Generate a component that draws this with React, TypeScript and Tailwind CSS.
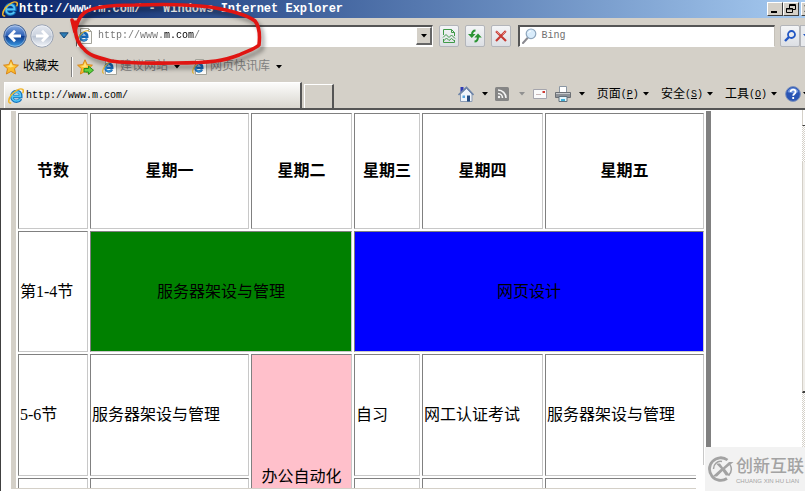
import type { ReactNode } from "react";

const cjk = "font-['Liberation_Mono','Noto_Sans_CJK_SC',monospace]";

function IeLogo({ className = "h-4 w-4" }: { className?: string }) {
  return (
    <svg viewBox="0 0 16 16" className={`shrink-0 ${className}`} fill="none" aria-hidden="true">
      <path d="M12.600 10.800C11.800 12.300 10.300 13.200 8.500 13.200c-2.700 0-4.700-2-4.700-4.800s2-4.900 4.700-4.900 4.300 2 4.300 5H5" stroke="#1273bd" strokeWidth="3.400" />
      <path d="M12.300 10.800C11.500 12.200 10.100 13 8.500 13c-2.500 0-4.400-2-4.400-4.600s1.900-4.600 4.400-4.600 4 2 4 4.600H5" stroke="#55c6f5" strokeWidth="1.700" />
      <path d="M2.600 15C.2 15.600-.2 11.500 3.400 6.800 7 2.300 12.600-.2 14.600 1.400c1 .8.8 2.200.2 3.400" stroke="#f0b52a" strokeWidth="1.500" strokeLinecap="round" />
    </svg>
  );
}

function IePage() {
  return (
    <svg viewBox="0 0 16 16" className="h-4 w-4 shrink-0" fill="none" aria-hidden="true">
      <path d="M3.500.5h8l3 3v12h-11z" fill="#fcfcfa" stroke="#a3a39a" />
      <path d="M11.500.5v3h3" stroke="#a3a39a" />
      <path d="M10 10.600c-.6 1.300-1.700 1.900-3 1.900-2 0-3.500-1.600-3.500-3.800S5 5 7 5s3.300 1.600 3.300 3.700H4.500" stroke="#1668b8" strokeWidth="2.400" />
      <path d="M9.800 10.600c-.6 1.200-1.600 1.700-2.800 1.700-1.800 0-3.200-1.500-3.200-3.600S5.200 5.300 7 5.300" stroke="#4db2ea" />
      <path d="M2 14.300C-.4 14.300.3 10 3.600 6.300 6.700 3 10.800 1.700 11.900 3.200" stroke="#e3b53a" strokeWidth="1.200" />
    </svg>
  );
}

function Caret({ className = "text-black" }: { className?: string }) {
  return (
    <svg viewBox="0 0 6 4" className={`h-1 w-1.5 shrink-0 ${className}`} fill="currentColor" aria-hidden="true">
      <path d="M0 0h6L3 3.400z" />
    </svg>
  );
}

function Star({ arrow = false }: { arrow?: boolean }) {
  return (
    <svg viewBox="0 0 17 16" className="h-4 w-[17px] shrink-0" aria-hidden="true">
      <path d="M8 .8l2.200 4.800 5.200.6-3.900 3.500 1.100 5.300L8 12.400 3.400 15l1.100-5.300L.6 6.200l5.200-.6z" fill="#fbbd2c" stroke="#d9861a" strokeLinejoin="round" />
      <path d="M8 3l1.400 3.400 3 .5-5 1.600-3.800-1.600 3-.5z" fill="#ffe27c" />
      {arrow && <path d="M7 9.500h4.500V7l5 4.200-5 4.200V13H7z" fill="#5fd03c" stroke="#278a1c" strokeLinejoin="round" />}
    </svg>
  );
}

function RoundArrow({ back = false }: { back?: boolean }) {
  return (
    <svg viewBox="0 0 24 24" className="h-6 w-6" aria-hidden="true">
      <defs>
        <linearGradient id={back ? "back" : "fwd"} x1="0" y1="0" x2="0" y2="1">
          <stop offset="0" stopColor={back ? "#8fb2e6" : "#e6eaf1"} />
          <stop offset=".48" stopColor={back ? "#2c5fb4" : "#cbd2de"} />
          <stop offset=".52" stopColor={back ? "#0d3b8e" : "#b9c3d2"} />
          <stop offset="1" stopColor={back ? "#3fa2ea" : "#f6f8fc"} />
        </linearGradient>
      </defs>
      <circle cx="12" cy="12" r="11.200" fill={`url(#${back ? "back" : "fwd"})`} stroke={back ? "#4b668f" : "#98a1b1"} />
      <circle cx="12" cy="12" r="10.200" fill="none" stroke="#fff" strokeOpacity=".45" strokeWidth=".8" />
      <path
        d={back ? "M18 12H7.500M12 6.800L6.800 12l5.200 5.200" : "M6 12h10.500M12 6.800l5.200 5.200-5.200 5.200"}
        fill="none"
        stroke="#fff"
        strokeWidth="2.800"
      />
    </svg>
  );
}

function NavButton({ label, children }: { label: string; children: ReactNode }) {
  return (
    <button
      aria-label={label}
      className="flex h-[22px] w-5 shrink-0 items-center justify-center rounded-xs border border-[#b3b5ba] bg-linear-to-b from-[#f4f5f7] to-[#dcdfe4]"
    >
      {children}
    </button>
  );
}

function TitleButton({ label, children }: { label: string; children: ReactNode }) {
  return (
    <button
      aria-label={label}
      className="flex h-3.5 w-4 shrink-0 items-center justify-center border border-t-white border-r-[#404040] border-b-[#404040] border-l-white bg-[#d4d0c8]"
    >
      <svg viewBox="0 0 12 10" className="h-2.5 w-3" fill="none" stroke="#000" aria-hidden="true">
        {children}
      </svg>
    </button>
  );
}

function TitleBar() {
  return (
    <header className="flex h-[18px] shrink-0 items-center bg-linear-to-r from-[#0a246a] to-[#a6caf0] pl-0.5">
      <IeLogo />
      <h1 className="ml-px flex-1 font-['Liberation_Mono',monospace] text-[12px] leading-4 font-bold whitespace-nowrap text-white">
        http://www.m.com/ - Windows Internet Explorer
      </h1>
      <TitleButton label="Minimize">
        <path d="M2 8h6" strokeWidth="2" />
      </TitleButton>
      <TitleButton label="Restore">
        <path d="M4.500 4V.5h6v5H8M4 1.500h7M1.500 4.500h6v4h-6zM1 5h7" />
      </TitleButton>
      <div className="ml-0.5 flex w-1 shrink-0 overflow-hidden">
        <TitleButton label="Close">
          <path d="M2 1l7 7M9 1L2 8" strokeWidth="2" />
        </TitleButton>
      </div>
    </header>
  );
}

function NavRow() {
  return (
    <div className="flex h-[35px] shrink-0 items-center overflow-hidden pl-[3px]">
      <button aria-label="Back" className="mr-[3px] shrink-0 rounded-full">
        <RoundArrow back />
      </button>
      <button aria-label="Forward" className="shrink-0 rounded-full">
        <RoundArrow />
      </button>
      <button aria-label="Recent pages" className="mx-[5px] shrink-0">
        <svg viewBox="0 0 10 7" className="h-[7px] w-2.5" aria-hidden="true">
          <path d="M.8.8h8.400L5 6z" fill="#2d7db5" stroke="#1c4b78" strokeLinejoin="round" />
        </svg>
      </button>
      <div className="mr-1.5 ml-0.5 flex h-[22px] min-w-0 flex-[359] items-center border border-t-2 border-t-[#555] border-r-white border-b-white border-l-[#555] bg-white">
        <IePage />
        <input
          aria-label="Address"
          defaultValue="http://www.m.com/"
          className="ml-[5px] min-w-0 flex-1 bg-[linear-gradient(to_right,#707070_66px,#000_66px,#000_96px,#707070_96px)] bg-clip-text font-['Liberation_Mono',monospace] text-[10px] leading-4 text-transparent outline-none"
        />
        <button
          aria-label="Show addresses"
          className="flex h-[18px] w-4 items-center justify-center border border-t-white border-r-2 border-r-[#666] border-b-2 border-b-[#666] border-l-white bg-[#d4d0c8]"
        >
          <Caret />
        </button>
      </div>
      <div className="mr-[7px] flex gap-1.5">
        <NavButton label="Compatibility view">
          <svg viewBox="0 0 14 16" className="h-4 w-3.5" fill="none" stroke="#3f9a48" aria-hidden="true">
            <path d="M1.500 7V1.500h8l3 3V8M9.500 1.500v3h3M1.500 11v3.500h11V12" />
            <path d="M1 9.500l3-3 3 3 2.500-2.500L13 10.500M1.500 13l3-3 2.500 2.500 2.500-2 3 2.500" />
          </svg>
        </NavButton>
        <NavButton label="Refresh">
          <svg viewBox="0 0 16 14" className="h-3.5 w-4" fill="none" stroke="#2b9433" strokeWidth="2" aria-hidden="true">
            <path d="M8.500 1.500C6 1.500 5 3 5 6" />
            <path d="M7.500 12.500c2.500 0 3.500-1.500 3.500-5" />
            <path d="M1 5h7.500L4.800 9zM7.300 8.500h7.500L11 4.500z" fill="#2b9433" stroke="none" />
          </svg>
        </NavButton>
        <NavButton label="Stop">
          <svg viewBox="0 0 12 12" className="h-3 w-3" fill="none" aria-hidden="true">
            <path d="M1 1.200l10 9.800M10.800 1L1 11" stroke="#c63a34" strokeWidth="2.200" />
            <path d="M1.500 1.500l3 3M10.500 1.500l-3 3" stroke="#e88d84" />
          </svg>
        </NavButton>
      </div>
      <div className="mr-[5px] flex h-[22px] min-w-0 flex-[254] items-center border border-t-2 border-t-[#555] border-r-[#c4c0b8] border-b-white border-l-2 border-l-[#555] bg-white pl-0.5">
        <svg viewBox="0 0 15 16" className="h-4 w-[15px] shrink-0" aria-hidden="true">
          <path d="M5.500 10L1 15" stroke="#8a8a90" strokeWidth="2" strokeLinecap="round" />
          <circle cx="9" cy="5.800" r="4.800" fill="#d9ecfb" stroke="#8ea6bd" strokeWidth="1.200" />
          <path d="M6.500 5a2.800 2.800 0 012.500-2" stroke="#fff" fill="none" />
        </svg>
        <input
          aria-label="Search"
          placeholder="Bing"
          className="ml-1 min-w-0 flex-1 font-['Liberation_Mono',monospace] text-[10px] leading-4 placeholder:text-[#707070] outline-none"
        />
      </div>
      <NavButton label="Search Bing">
        <svg viewBox="0 0 12 12" className="h-3 w-3" fill="none" stroke="#2257c4" aria-hidden="true">
          <circle cx="7.500" cy="4.500" r="3.500" strokeWidth="1.800" />
          <path d="M5 7L1 11" strokeWidth="2.400" />
        </svg>
      </NavButton>
      <div className="flex h-[22px] w-[5px] shrink-0 items-center overflow-hidden border-y border-l border-[#b3b5ba] bg-[#e8eaed] pl-0.5">
        <Caret className="text-[#2257c4]" />
      </div>
    </div>
  );
}

function FavoritesRow() {
  return (
    <div className={`flex h-[27px] shrink-0 items-center pl-[3px] text-[12px] leading-4 whitespace-nowrap ${cjk}`}>
      <button className="flex items-center gap-[3px]">
        <Star />
        收藏夹
      </button>
      <span className="ml-3 h-5 w-0.5 border-l border-[#808080] bg-white" />
      <button aria-label="Add to favorites" className="ml-1">
        <Star arrow />
      </button>
      <button className="ml-2 flex items-center gap-0.5 text-[#808080]">
        <IePage />
        建议网站
        <span className="ml-1">
          <Caret />
        </span>
      </button>
      <button className="ml-3 flex items-center gap-0.5 text-[#808080]">
        <IePage />
        网页快讯库
        <span className="ml-1">
          <Caret />
        </span>
      </button>
    </div>
  );
}

const menus = [
  { name: "页面", key: "P" },
  { name: "安全", key: "S" },
  { name: "工具", key: "O" },
];

function TabRow() {
  return (
    <div className={`flex h-[30px] shrink-0 items-end overflow-hidden border-b-2 border-[#555] pl-1 text-[12px] leading-4 whitespace-nowrap ${cjk}`}>
      <button className="flex h-[26px] w-[298px] items-center gap-0.5 border-t border-r-2 border-l border-t-white border-r-[#555] border-l-white bg-linear-to-b from-[#fcfcfb] to-[#d9d6cf] pl-[3px] text-[10px]">
        <IeLogo />
        http://www.m.com/
      </button>
      <button
        aria-label="New tab"
        className="ml-0.5 h-6 w-[30px] border-t border-r-2 border-l border-t-white border-r-[#555] border-l-white"
      />
      <div className="flex h-7 flex-1 items-center justify-end">
        <button aria-label="Home" className="mr-2 shrink-0">
          <svg viewBox="0 0 16 16" className="h-4 w-4" aria-hidden="true">
            <path d="M2.500 1h3v5h-3z" fill="#2d38b5" />
            <path d="M2.500 8L8.500 2.500l5.500 5.500v7.500H2.500z" fill="#eef3fa" stroke="#8b9bb4" />
            <path d="M.5 9l8-7.500 7 7.500" fill="none" stroke="#6d84a8" strokeWidth="1.600" />
            <path d="M9 9.500h3v6H9z" fill="#254c82" />
            <path d="M4.500 9.500h2.500V12H4.500z" fill="#58a5de" />
          </svg>
        </button>
        <Caret />
        <button aria-label="Feeds" className="mr-2.5 ml-[7px] shrink-0">
          <svg viewBox="0 0 14 14" className="h-3.5 w-3.5" fill="none" stroke="#f4f4f4" aria-hidden="true">
            <rect width="14" height="14" rx="1.500" fill="#858585" stroke="none" />
            <path d="M3 6.500A4.500 4.500 0 017.500 11M3 3a8 8 0 018 8" strokeWidth="1.600" />
            <circle cx="4" cy="10" r="1.200" fill="#f4f4f4" stroke="none" />
          </svg>
        </button>
        <Caret className="text-[#909090]" />
        <button aria-label="Read mail" className="mx-2 shrink-0">
          <svg viewBox="0 0 14 10" className="h-2.5 w-3.5" aria-hidden="true">
            <path d="M.5.5h13v9H.5z" fill="#fafafa" stroke="#a5a5ad" />
            <path d="M9.500 2h2.500v2H9.500z" fill="#cf3b32" />
            <path d="M3 5.500h5" stroke="#c9b8b8" />
          </svg>
        </button>
        <button aria-label="Print" className="mr-2 shrink-0">
          <svg viewBox="0 0 16 16" className="h-4 w-4" aria-hidden="true">
            <path d="M4.500.5h7v6h-7z" fill="#fff" stroke="#8b97a4" />
            <path d="M.5 6.500h15v5H.5z" fill="#8d9196" stroke="#6b6f74" />
            <path d="M1 7.500h14" stroke="#c9cccf" />
            <path d="M4 10.500h8v5H4z" fill="#e4f5fb" stroke="#62717d" />
            <path d="M6 13h4v2H6z" fill="#40b0d8" />
          </svg>
        </button>
        <Caret />
        {menus.map((menu) => (
          <button key={menu.key} className="ml-3 flex items-center gap-1">
            <span className="flex items-center pt-0.5">
              {menu.name}
              <span className="text-[10px]">
                (<u>{menu.key}</u>)
              </span>
            </span>
            <Caret />
          </button>
        ))}
        <button aria-label="Help" className="mr-0.5 ml-2 shrink-0">
          <svg viewBox="0 0 16 16" className="h-4 w-4" fill="none" aria-hidden="true">
            <circle cx="8" cy="8" r="7.400" fill="#2a55b4" stroke="#7e93bd" />
            <path d="M2.500 6a5.800 5.800 0 0111 0c-3 1.500-8 1.500-11 0z" fill="#6c92dc" />
            <path d="M5.600 6c0-3.200 5-3 5 0 0 1.800-2.400 1.800-2.400 3.800M8.200 11v2" stroke="#fff" strokeWidth="1.800" />
          </svg>
        </button>
        <div className="flex w-0.5 shrink-0 overflow-hidden">
          <Caret />
        </div>
      </div>
    </div>
  );
}

const cell = "border border-t-[#808080] border-r-[#c8c8c8] border-b-[#c8c8c8] border-l-[#808080] px-px";
const days = ["节数", "星期一", "星期二", "星期三", "星期四", "星期五"];

function Timetable() {
  return (
    <table className="w-full table-fixed border-separate border-spacing-0.5 border-r-[5px] border-l-[5px] border-r-[#808080] border-l-[#d4d0c8] font-['Liberation_Serif','Noto_Sans_CJK_SC',serif] text-[16px] leading-6 text-black">
      <colgroup>
        <col className="w-[70px]" />
        <col className="w-[159px]" />
        <col className="w-[101px]" />
        <col className="w-[66px]" />
        <col className="w-[121px]" />
        <col className="w-[159px]" />
      </colgroup>
      <thead>
        <tr className="h-[116px]">
          {days.map((day) => (
            <th key={day} className={cell}>
              {day}
            </th>
          ))}
        </tr>
      </thead>
      <tbody>
        <tr className="h-[121px]">
          <td className={cell}>第1-4节</td>
          <td colSpan={2} className={`${cell} bg-[#008000] text-center`}>
            服务器架设与管理
          </td>
          <td colSpan={3} className={`${cell} bg-[#0000ff] text-center`}>
            网页设计
          </td>
        </tr>
        <tr className="h-[122px]">
          <td className={cell}>5-6节</td>
          <td className={cell}>服务器架设与管理</td>
          <td rowSpan={2} className={`${cell} bg-[#ffc0cb] text-center`}>
            办公自动化
          </td>
          <td className={cell}>自习</td>
          <td className={cell}>网工认证考试</td>
          <td className={cell}>服务器架设与管理</td>
        </tr>
        <tr className="h-[121px]">
          <td className={cell} />
          <td className={cell} />
          <td className={cell} />
          <td className={cell} />
          <td className={cell} />
        </tr>
      </tbody>
    </table>
  );
}

const dither = "bg-[repeating-conic-gradient(#d4d0c8_0_25%,#fff_0_50%)] bg-size-[2px_2px]";

function Scrollbar() {
  return (
    <div className="flex w-[3px] shrink-0 flex-col">
      <div className="h-4 border-b border-l border-b-[#404040] border-l-[#d4d0c8] bg-white" />
      <div className={`h-9 ${dither}`} />
      <div className="flex-[230] border-b-2 border-l border-b-[#404040] border-l-[#d4d0c8] bg-[#f0eeea]" />
      <div className={`flex-[98] ${dither}`} />
    </div>
  );
}

function Watermark() {
  return (
    <div className="absolute right-0 bottom-0 flex items-end">
      <div className="h-[26px] w-[9px] bg-white" />
      <div className="flex h-11 w-[100px] items-center gap-0.5 bg-[#f2f2f2] pl-[3px] text-[#a3a3a3]">
        <svg viewBox="0 0 26 26" className="h-[26px] w-[26px] shrink-0" fill="none" stroke="currentColor" aria-hidden="true">
          <path d="M19.500 4A11.300 11.300 0 1019 22.500" strokeWidth="2.800" />
          <path d="M5.500 13c0-5 4-8.500 8.500-7.500M22 8.500c2.200 4 1.500 8-1.500 11" strokeWidth="1.500" />
          <path d="M8 7.500h4l3 4 6-5.500h4.500L17 13l5 6.500h-4.200l-3.200-4.400L9 20.500H4.500l8.500-7.700z" fill="currentColor" stroke="none" />
        </svg>
        <div className="flex flex-col whitespace-nowrap">
          <span className="font-['Noto_Sans_CJK_SC',sans-serif] text-[17px] leading-6 font-medium">创新互联</span>
          <span className="font-['Liberation_Sans',sans-serif] text-[6px] leading-2">CHUANG XIN HU LIAN</span>
        </div>
      </div>
    </div>
  );
}

function RedCircle() {
  return (
    <svg
      viewBox="0 0 280 80"
      className="pointer-events-none absolute top-0 left-0 h-20 w-[280px] drop-shadow-[3px_4px_2px_rgba(0,0,0,0.4)]"
      fill="none"
      stroke="#e01512"
      strokeWidth="3.600"
      strokeLinecap="round"
      strokeLinejoin="round"
      aria-hidden="true"
    >
      <path d="M72 20c1 4 2 8 3 12 1-6 3-14 9-19 9-7 32-8 51-8 27-1 52-1 75 2 18 3 36 7 45 14 5 6 5 15 4 24-4 4-12 6-20 10-8 3-15 5-23 6-14 2-28 2-42 2-20 0-42 1-63-2-11-3-22-5-27-12-8-7-9-16-9-27" />
    </svg>
  );
}

export default function App() {
  return (
    <div className="relative flex h-screen flex-col overflow-hidden bg-[#d4d0c8] text-black">
      <TitleBar />
      <NavRow />
      <FavoritesRow />
      <TabRow />
      <main className="flex min-h-0 flex-1 border-l border-[#404040] bg-white">
        <div className="mb-0.5 ml-2.5 flex min-w-0 flex-1 items-start overflow-hidden border-b border-[#d4d0c8]">
          <div className="mt-px min-w-0 flex-1">
            <Timetable />
          </div>
          <div className="w-[91px] shrink-0" />
        </div>
        <Scrollbar />
      </main>
      <Watermark />
      <RedCircle />
    </div>
  );
}
